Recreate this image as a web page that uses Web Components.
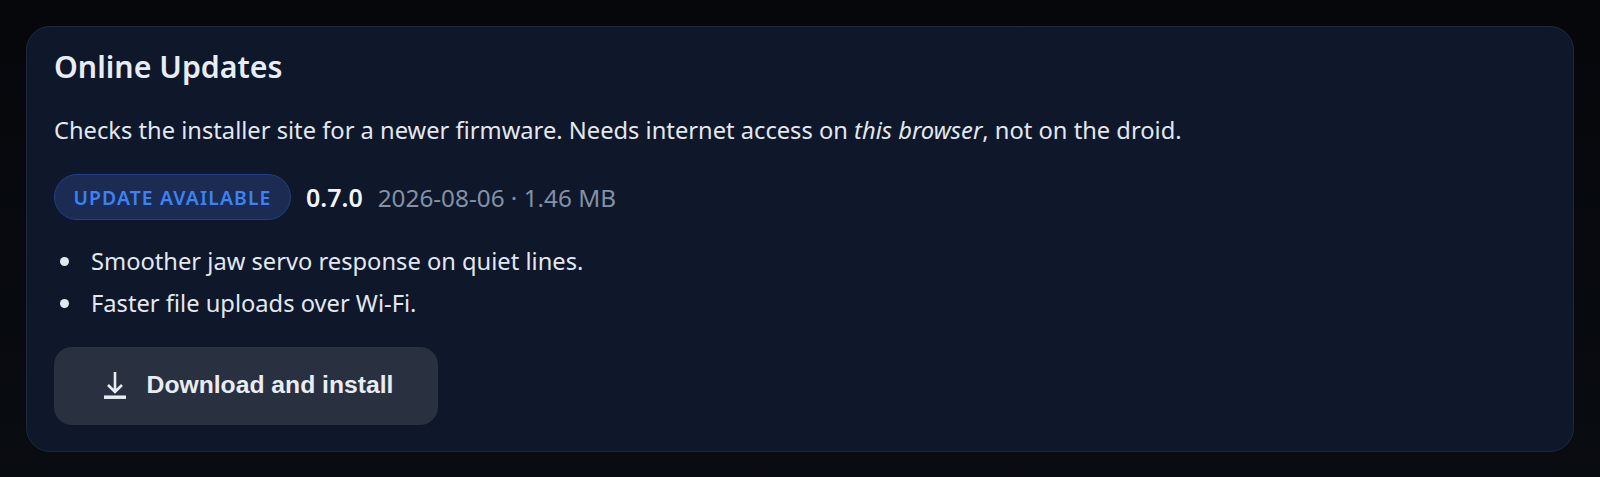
<!DOCTYPE html>
<html lang="en">
<head>
<meta charset="utf-8">
<title>Online Updates</title>
<style>
  html, body { margin: 0; height: 100%; }
  body {
    padding: 26px;
    box-sizing: border-box;
    overflow: hidden;
    background: linear-gradient(180deg, #05070b, #090c11);
    font-family: "Noto Sans", "Open Sans", sans-serif;
  }
</style>
</head>
<body>
<update-card heading="Online Updates">
  <span slot="intro">Checks the installer site for a newer firmware. Needs internet access on <em>this browser</em>, not on the droid.</span>
  <status-pill slot="status">UPDATE AVAILABLE</status-pill>
  <span slot="version">0.7.0</span>
  <span slot="meta">2026-08-06 · 1.46 MB</span>
  <note-item slot="notes">Smoother jaw servo response on quiet lines.</note-item>
  <note-item slot="notes">Faster file uploads over Wi-Fi.</note-item>
  <install-button slot="action">Download and install</install-button>
</update-card>

<script>
class UpdateCard extends HTMLElement {
  connectedCallback() {
    this.attachShadow({ mode: 'open' });
    this.shadowRoot.innerHTML = `
      <style>
        :host {
          display: block;
          box-sizing: border-box;
          height: 426px;
          padding: 21px 27px 26px;
          background: #0f172a;
          border: 1px solid #1e293b;
          border-radius: 24px;
          color: #e2e8f0;
        }
        h2 {
          margin: 0;
          font-size: 30.3px;
          line-height: 38px;
          font-weight: 600;
          color: #e8edf4;
        }
        .intro {
          margin: 26px 0 0;
          font-size: 23.7px;
          line-height: 36px;
        }
        .status {
          display: flex;
          align-items: center;
          gap: 15px;
          margin-top: 26px;
        }
        .version {
          font-size: 25px;
          font-weight: 600;
          color: #f1f5f9;
        }
        .meta {
          font-size: 24.3px;
          color: #8291a7;
        }
        .notes {
          margin-top: 20px;
          font-size: 23.7px;
          line-height: 42px;
        }
        .action { margin-top: 23px; }
      </style>
      <h2>${this.getAttribute('heading')}</h2>
      <p class="intro"><slot name="intro"></slot></p>
      <div class="status">
        <slot name="status"></slot>
        <span class="version"><slot name="version"></slot></span>
        <span class="meta"><slot name="meta"></slot></span>
      </div>
      <div class="notes"><slot name="notes"></slot></div>
      <div class="action"><slot name="action"></slot></div>
    `;
  }
}
customElements.define('update-card', UpdateCard);

class NoteItem extends HTMLElement {
  connectedCallback() {
    this.attachShadow({ mode: 'open' });
    this.shadowRoot.innerHTML = `
      <style>
        :host {
          display: flex;
          align-items: center;
          gap: 22px;
          padding-left: 6px;
        }
        i {
          width: 9px;
          height: 9px;
          border-radius: 50%;
          background: #e2e8f0;
        }
      </style>
      <i></i><span><slot></slot></span>
    `;
  }
}
customElements.define('note-item', NoteItem);

class StatusPill extends HTMLElement {
  connectedCallback() {
    this.attachShadow({ mode: 'open' });
    this.shadowRoot.innerHTML = `
      <style>
        :host {
          display: inline-flex;
          align-items: center;
          justify-content: center;
          box-sizing: border-box;
          width: 237px;
          height: 46px;
          background: #1b2b52;
          border: 1.5px solid #1f4088;
          border-radius: 23px;
          color: #3b82f6;
          font-size: 19.4px;
          font-weight: 600;
          letter-spacing: 1.1px;
        }
      </style>
      <slot></slot>
    `;
  }
}
customElements.define('status-pill', StatusPill);

class InstallButton extends HTMLElement {
  connectedCallback() {
    this.attachShadow({ mode: 'open' });
    this.shadowRoot.innerHTML = `
      <style>
        :host {
          display: inline-flex;
          align-items: center;
          justify-content: center;
          gap: 16px;
          box-sizing: border-box;
          width: 384px;
          height: 78px;
          background: #293040;
          border-radius: 18px;
          color: #e8edf4;
          font-family: "Liberation Sans", Arial, sans-serif;
          font-size: 24.7px;
          font-weight: 700;
        }
        svg { display: block; width: 32px; height: 32px; }
        span { margin-bottom: 2px; }
      </style>
      <svg viewBox="0 0 32 32" fill="none" stroke="currentColor" stroke-width="2.6">
        <path d="M16 2v20M9 15l7 7 7-7"/>
        <path d="M5 27.2h22" stroke-width="3.5"/>
      </svg>
      <span><slot></slot></span>
    `;
  }
}
customElements.define('install-button', InstallButton);
</script>
</body>
</html>
